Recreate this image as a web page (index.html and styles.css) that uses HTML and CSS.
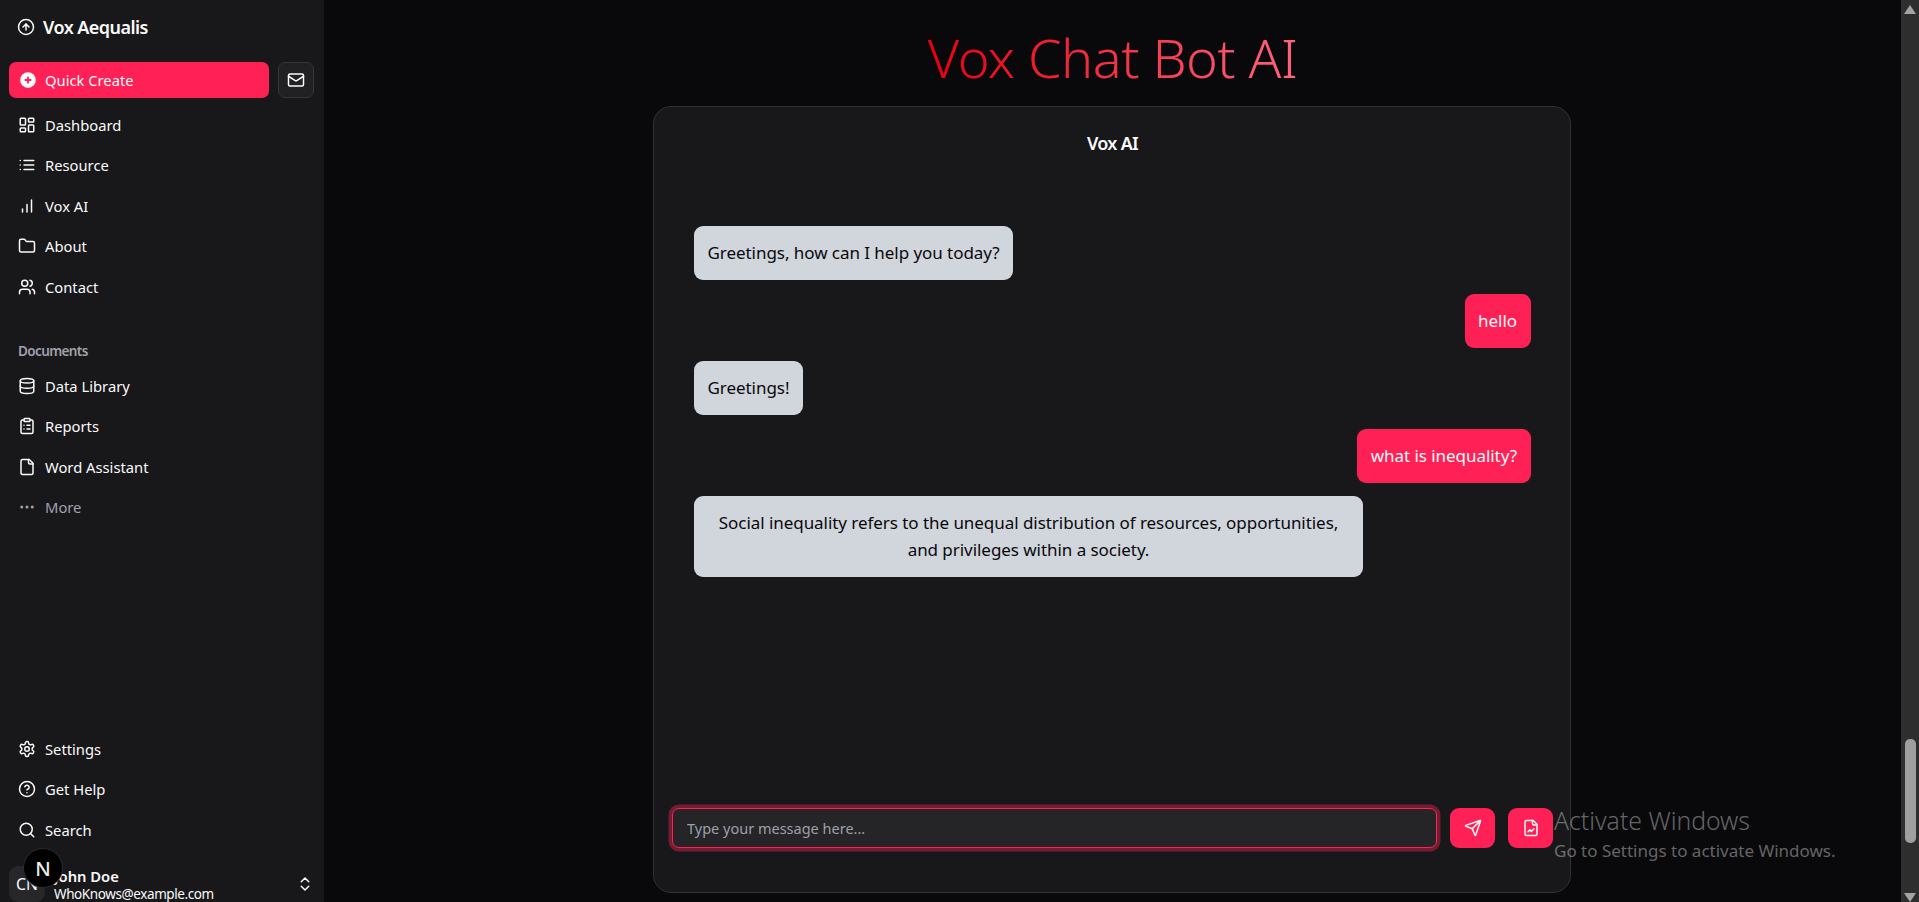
FILE: index.html

```html
<!DOCTYPE html>
<html>
<head>
    <title>Vox Chat Bot AI</title>
    <meta charset="UTF-8">
    <link rel="stylesheet" href="styles.css">
</head>
<body>
    <div class="layout">
        <aside class="sidebar">
            <div class="brand">
                <svg class="icon" viewBox="0 0 24 24"><circle cx="12" cy="12" r="10"/><path d="m16 12-4-4-4 4"/><path d="M12 16V8"/></svg>
                <span>Vox Aequalis</span>
            </div>

            <div class="quick-row">
                <button class="quick-create">
                    <svg class="icon" viewBox="0 0 24 24"><circle class="plus-disc" cx="12" cy="12" r="10.5"/><path class="plus-mark" d="M12 8.5v7M8.5 12h7"/></svg>
                    <span>Quick Create</span>
                </button>
                <button class="mail-btn">
                    <svg class="icon" viewBox="0 0 24 24"><rect x="2" y="4" width="20" height="16" rx="2"/><path d="m22 7-8.97 5.7a1.94 1.94 0 0 1-2.06 0L2 7"/></svg>
                </button>
            </div>

            <nav class="nav">
                <a class="nav-item"><svg class="icon" viewBox="0 0 24 24"><rect x="3" y="3" width="7" height="9" rx="1"/><rect x="14" y="3" width="7" height="5" rx="1"/><rect x="14" y="12" width="7" height="9" rx="1"/><rect x="3" y="16" width="7" height="5" rx="1"/></svg>Dashboard</a>
                <a class="nav-item"><svg class="icon" viewBox="0 0 24 24"><path d="M3 12h.01M3 18h.01M3 6h.01M8 12h13M8 18h13M8 6h13"/></svg>Resource</a>
                <a class="nav-item"><svg class="icon" viewBox="0 0 24 24"><path d="M12 20V10M18 20V4M6 20v-4"/></svg>Vox AI</a>
                <a class="nav-item"><svg class="icon" viewBox="0 0 24 24"><path d="M20 20a2 2 0 0 0 2-2V8a2 2 0 0 0-2-2h-7.9a2 2 0 0 1-1.69-.9L9.6 3.9A2 2 0 0 0 7.93 3H4a2 2 0 0 0-2 2v13a2 2 0 0 0 2 2Z"/></svg>About</a>
                <a class="nav-item"><svg class="icon" viewBox="0 0 24 24"><path d="M16 21v-2a4 4 0 0 0-4-4H6a4 4 0 0 0-4 4v2"/><circle cx="9" cy="7" r="4"/><path d="M22 21v-2a4 4 0 0 0-3-3.87"/><path d="M16 3.13a4 4 0 0 1 0 7.75"/></svg>Contact</a>
            </nav>

            <div class="nav-label">Documents</div>
            <nav class="nav">
                <a class="nav-item"><svg class="icon" viewBox="0 0 24 24"><ellipse cx="12" cy="5" rx="9" ry="3"/><path d="M3 5V19A9 3 0 0 0 21 19V5"/><path d="M3 12A9 3 0 0 0 21 12"/></svg>Data Library</a>
                <a class="nav-item"><svg class="icon" viewBox="0 0 24 24"><rect x="8" y="2" width="8" height="4" rx="1"/><path d="M16 4h2a2 2 0 0 1 2 2v14a2 2 0 0 1-2 2H6a2 2 0 0 1-2-2V6a2 2 0 0 1 2-2h2"/><path d="M12 11h4M12 16h4M8 11h.01M8 16h.01"/></svg>Reports</a>
                <a class="nav-item"><svg class="icon" viewBox="0 0 24 24"><path d="M15 2H6a2 2 0 0 0-2 2v16a2 2 0 0 0 2 2h12a2 2 0 0 0 2-2V7Z"/><path d="M14 2v4a2 2 0 0 0 2 2h4"/></svg>Word Assistant</a>
                <a class="nav-item muted"><svg class="icon" viewBox="0 0 24 24"><circle cx="5" cy="12" r="1"/><circle cx="12" cy="12" r="1"/><circle cx="19" cy="12" r="1"/></svg>More</a>
            </nav>

            <nav class="nav nav-bottom">
                <a class="nav-item"><svg class="icon" viewBox="0 0 24 24"><path d="M12.22 2h-.44a2 2 0 0 0-2 2v.18a2 2 0 0 1-1 1.73l-.43.25a2 2 0 0 1-2 0l-.15-.08a2 2 0 0 0-2.73.73l-.22.38a2 2 0 0 0 .73 2.73l.15.1a2 2 0 0 1 1 1.72v.51a2 2 0 0 1-1 1.74l-.15.09a2 2 0 0 0-.73 2.73l.22.38a2 2 0 0 0 2.73.73l.15-.08a2 2 0 0 1 2 0l.43.25a2 2 0 0 1 1 1.73V20a2 2 0 0 0 2 2h.44a2 2 0 0 0 2-2v-.18a2 2 0 0 1 1-1.73l.43-.25a2 2 0 0 1 2 0l.15.08a2 2 0 0 0 2.73-.73l.22-.39a2 2 0 0 0-.73-2.73l-.15-.08a2 2 0 0 1-1-1.74v-.5a2 2 0 0 1 1-1.74l.15-.09a2 2 0 0 0 .73-2.73l-.22-.38a2 2 0 0 0-2.73-.73l-.15.08a2 2 0 0 1-2 0l-.43-.25a2 2 0 0 1-1-1.73V4a2 2 0 0 0-2-2z"/><circle cx="12" cy="12" r="3"/></svg>Settings</a>
                <a class="nav-item"><svg class="icon" viewBox="0 0 24 24"><circle cx="12" cy="12" r="10"/><path d="M9.09 9a3 3 0 0 1 5.83 1c0 2-3 3-3 3"/><path d="M12 17h.01"/></svg>Get Help</a>
                <a class="nav-item"><svg class="icon" viewBox="0 0 24 24"><path d="m21 21-4.34-4.34"/><circle cx="11" cy="11" r="8"/></svg>Search</a>
            </nav>

            <div class="user">
                <div class="avatar">CN</div>
                <div class="user-info">
                    <div class="user-name">John Doe</div>
                    <div class="user-mail">WhoKnows@example.com</div>
                </div>
                <svg class="icon" viewBox="0 0 24 24"><path d="m7 15 5 5 5-5"/><path d="m7 9 5-5 5 5"/></svg>
            </div>
        </aside>

        <main class="main">
            <h1 class="title">Vox Chat Bot AI</h1>
            <section class="chat-card">
                <h2 class="chat-title">Vox AI</h2>
                <div class="messages">
                    <div class="msg bot">Greetings, how can I help you today?</div>
                    <div class="msg me">hello</div>
                    <div class="msg bot">Greetings!</div>
                    <div class="msg me">what is inequality?</div>
                    <div class="msg bot">Social inequality refers to the unequal distribution of resources, opportunities, and privileges within a society.</div>
                </div>
                <div class="composer">
                    <input class="chat-input" type="text" placeholder="Type your message here...">
                    <button class="send-btn">
                        <svg class="icon" viewBox="0 0 24 24"><path d="M14.536 21.686a.5.5 0 0 0 .937-.024l6.5-19a.496.496 0 0 0-.635-.635l-19 6.5a.5.5 0 0 0-.024.937l7.93 3.18a2 2 0 0 1 1.112 1.11z"/><path d="m21.854 2.147-10.94 10.939"/></svg>
                    </button>
                    <button class="send-btn">
                        <svg class="icon" viewBox="0 0 24 24"><path d="M15 2H6a2 2 0 0 0-2 2v16a2 2 0 0 0 2 2h12a2 2 0 0 0 2-2V7Z"/><path d="M14 2v4a2 2 0 0 0 2 2h4"/><path d="m16 13-3.5 3.5-2-2L8 17"/></svg>
                    </button>
                </div>
            </section>
        </main>

        <div class="scrollbar">
            <div class="arrow-up"></div>
            <div class="thumb"></div>
            <div class="arrow-down"></div>
        </div>
    </div>

    <div class="dev-badge">N</div>
    <div class="watermark">
        <div class="wm-big">Activate Windows</div>
        <div class="wm-small">Go to Settings to activate Windows.</div>
    </div>
</body>
</html>
```

FILE: styles.css

```css
* {
    box-sizing: border-box;
}
html, body {
    height: 100%;
}
body {
    margin: 0;
    overflow: hidden;
    background-color: #09090b;
    color: #fafafa;
    font-family: "Noto Sans", Roboto, sans-serif;
    font-size: 14.75px;
}
button {
    font-family: inherit;
    border: none;
    cursor: pointer;
}
.layout {
    display: flex;
    height: 902px;
}
.icon {
    width: 18px;
    height: 18px;
    flex-shrink: 0;
    fill: none;
    stroke: currentColor;
    stroke-width: 2;
    stroke-linecap: round;
    stroke-linejoin: round;
}

/* sidebar */
.sidebar {
    width: 324px;
    flex-shrink: 0;
    display: flex;
    flex-direction: column;
    padding: 9px 9px 0;
    background-color: #18181b;
    overflow: hidden;
}
.brand {
    display: flex;
    align-items: center;
    gap: 8px;
    height: 36px;
    padding-left: 8px;
    font-size: 18px;
    font-weight: 600;
    letter-spacing: -0.55px;
}
.quick-row {
    display: flex;
    gap: 9px;
    margin-top: 17px;
    margin-bottom: 9px;
}
.quick-create {
    flex: 1;
    display: flex;
    align-items: center;
    gap: 8px;
    height: 36px;
    padding-left: 10px;
    background-color: #ff2056;
    color: #fafafa;
    border-radius: 7px;
    font-size: 14.75px;
}
.plus-disc {
    fill: #fafafa;
    stroke: none;
}
.plus-mark {
    stroke: #ff2056;
    stroke-width: 2.4;
}
.mail-btn {
    width: 36px;
    height: 36px;
    display: flex;
    align-items: center;
    justify-content: center;
    background-color: #212124;
    border: 1px solid #343438;
    border-radius: 7px;
    color: #fafafa;
    margin-right: 1px;
}
.nav {
    display: flex;
    flex-direction: column;
    gap: 4.5px;
}
.nav-item {
    display: flex;
    align-items: center;
    gap: 9px;
    height: 36px;
    padding-left: 9px;
    padding-bottom: 1px;
}
.muted {
    color: #a1a1aa;
}
.nav-label {
    height: 35px;
    margin-top: 28px;
    padding-left: 9px;
    display: flex;
    align-items: center;
    font-size: 13.5px;
    font-weight: 600;
    color: #a1a1aa;
    letter-spacing: -0.6px;
}
.nav-bottom {
    margin-top: auto;
}
.user {
    display: flex;
    align-items: center;
    gap: 9px;
    height: 36px;
    margin-top: 18px;
    padding-right: 1px;
    flex-shrink: 0;
}
.avatar {
    width: 36px;
    height: 36px;
    display: flex;
    align-items: center;
    justify-content: center;
    background-color: #27272a;
    border-radius: 9px;
    flex-shrink: 0;
    font-size: 15.75px;
}
.user-info {
    flex: 1;
    height: 36px;
}
.user-name {
    font-weight: 600;
    line-height: 21px;
}
.user-mail {
    font-size: 13.5px;
    line-height: 15px;
    letter-spacing: -0.4px;
}

/* main area */
.main {
    flex: 1;
    display: flex;
    flex-direction: column;
    align-items: center;
}
.title {
    height: 106px;
    margin: 0;
    padding-top: 19px;
    font-size: 54px;
    line-height: 76px;
    font-weight: 350;
    letter-spacing: -0.55px;
    background: linear-gradient(to right, #e7000b, #ff6380);
    -webkit-background-clip: text;
    background-clip: text;
    color: transparent;
}
.chat-card {
    width: 918px;
    height: 787px;
    margin-right: 1px;
    display: flex;
    flex-direction: column;
    background-color: #18181b;
    border: 1px solid #323236;
    border-radius: 18px;
    padding: 0 17px 44px 18px;
}
.chat-title {
    margin: 24px 0 0;
    text-align: center;
    font-size: 18px;
    line-height: 24px;
    font-weight: 600;
    letter-spacing: -0.7px;
}
.messages {
    flex: 1;
    display: flex;
    flex-direction: column;
    gap: 13.5px;
    padding: 71px 22.5px 0 22px;
}
.msg {
    max-width: 669px;
    padding: 13px 13.5px 14px;
    border-radius: 9px;
    font-size: 17px;
    line-height: 27px;
    letter-spacing: -0.05px;
    text-align: center;
}
.bot {
    align-self: flex-start;
    background-color: #d1d5dc;
    color: #09090b;
}
.me {
    align-self: flex-end;
    background-color: #ff2056;
    color: #fafafa;
}
.composer {
    display: flex;
    align-items: center;
    gap: 13px;
}
.chat-input {
    flex: 1;
    height: 40.5px;
    padding: 0 14px;
    background-color: #252528;
    border: 1.5px solid #ff2056;
    border-radius: 7px;
    box-shadow: 0 0 0 3.5px rgba(255, 32, 86, 0.4);
    color: #fafafa;
    font-family: inherit;
    font-size: 14.5px;
    outline: none;
}
.chat-input::placeholder {
    color: #9f9fa9;
}
.send-btn {
    width: 45px;
    height: 40px;
    display: flex;
    align-items: center;
    justify-content: center;
    background-color: #ff2056;
    color: #fafafa;
    border-radius: 9px;
}

/* fake window scrollbar */
.scrollbar {
    width: 18px;
    flex-shrink: 0;
    display: flex;
    flex-direction: column;
    align-items: center;
    background-color: #2e2e2e;
}
.arrow-up {
    width: 0;
    height: 0;
    margin-top: 5px;
    border-left: 6px solid transparent;
    border-right: 6px solid transparent;
    border-bottom: 9px solid #a3a3a3;
}
.thumb {
    width: 11px;
    height: 107px;
    margin-top: 725px;
    border-radius: 5px;
    background-color: #9f9f9f;
}
.arrow-down {
    width: 0;
    height: 0;
    margin-top: 50px;
    border-left: 6px solid transparent;
    border-right: 6px solid transparent;
    border-top: 9px solid #a3a3a3;
}

/* things lying over the page */
.dev-badge {
    position: absolute;
    left: 23px;
    top: 848px;
    width: 40px;
    height: 40px;
    display: flex;
    align-items: center;
    justify-content: center;
    background-color: #000;
    border: 1.5px solid #2b2b2b;
    border-radius: 50%;
    color: #eee;
    font-size: 20px;
    font-weight: 500;
}
.watermark {
    position: absolute;
    left: 1554px;
    top: 804px;
    color: rgba(255, 255, 255, 0.38);
    white-space: nowrap;
}
.wm-big {
    font-size: 24.75px;
    line-height: 34px;
    font-weight: 300;
}
.wm-small {
    font-size: 17px;
    line-height: 26px;
}
```
